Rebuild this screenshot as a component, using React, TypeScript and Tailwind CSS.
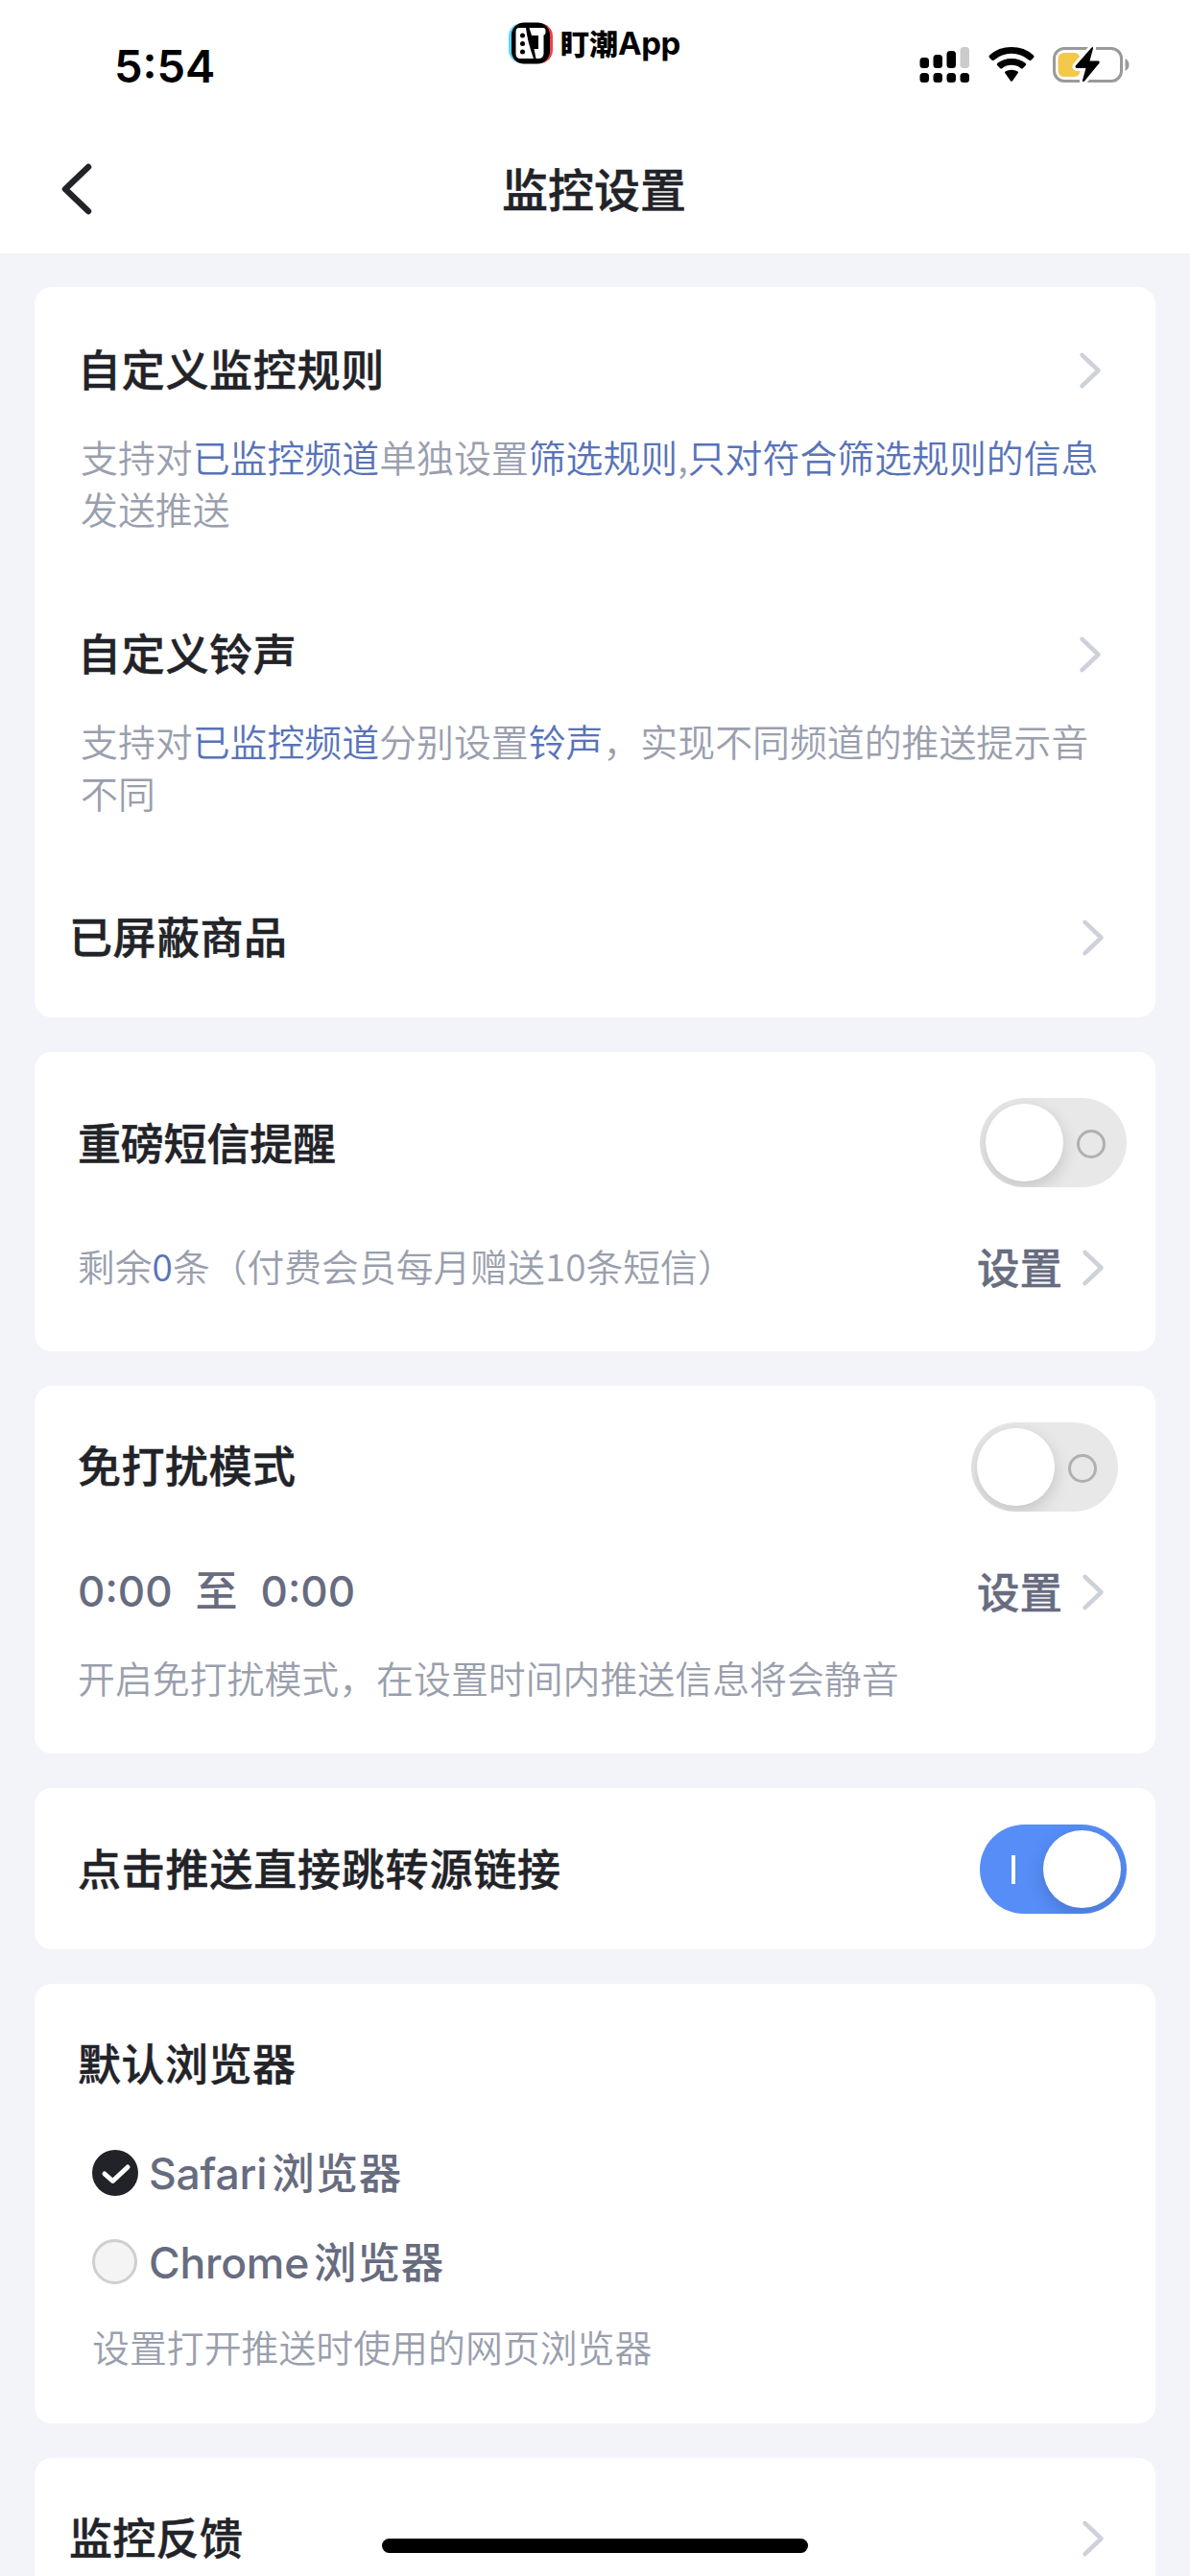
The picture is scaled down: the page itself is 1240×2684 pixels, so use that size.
import { useState } from 'react';
import type { ReactNode } from 'react';
import clsx from 'clsx';

const Chevron = ({ className }: { className?: string }) => (
  <svg width="24" height="40" viewBox="0 0 24 40" fill="none" className={clsx('shrink-0', className)}>
    <path d="M3.5 3.8L20.5 20L3.5 36.2" stroke="#cdd1da" strokeWidth="4.5" strokeLinecap="round" strokeLinejoin="round" />
  </svg>
);

const Toggle = ({ on, onChange, className }: { on: boolean; onChange: () => void; className?: string }) => (
  <button
    type="button"
    role="switch"
    aria-checked={on}
    onClick={onChange}
    className={clsx(
      'flex h-[93px] w-[153px] shrink-0 items-center justify-between overflow-hidden rounded-full px-1.5',
      on ? 'flex-row-reverse bg-[#568df7]' : 'bg-[#e8e8e8]',
      className
    )}
  >
    <span className="size-[81px] rounded-full bg-white shadow-[0_6px_18px_rgba(0,0,0,0.16)]" />
    {on ? (
      <span className="ml-[27px] h-[30px] w-1 bg-white" />
    ) : (
      <span className="mt-0.5 mr-4 size-[30px] rounded-full border-3 border-[#b0b0b0]" />
    )}
  </button>
);

const Card = ({ className, children }: { className?: string; children: ReactNode }) => (
  <section className={clsx('shrink-0 rounded-[18px] bg-white', className)}>{children}</section>
);

const Title = ({ className = 'tracking-[0.7px]', children }: { className?: string; children: ReactNode }) => (
  <h2
    className={clsx(
      'text-[45px] leading-[64px] font-medium whitespace-nowrap text-[#222328] [-webkit-text-stroke:0.5px]',
      className
    )}
  >
    {children}
  </h2>
);

const Blue = ({ children }: { children: ReactNode }) => <span className="text-[#5873b8]">{children}</span>;

const SettingLink = () => (
  <button type="button" className="flex items-center">
    <span className="text-[44.5px] leading-[64px] font-medium text-[#676c7f] [-webkit-text-stroke:0.4px]">设置</span>
    <Chevron className="mt-1 ml-5" />
  </button>
);

const StatusBar = () => (
  <div className="flex h-[132px] items-start justify-between pr-[63px] pl-[119px]">
    <span className="mt-[39px] w-[411px] font-[Inter,sans-serif] text-[47px] leading-[60px] font-semibold text-black">5:54</span>
    <div className="mt-[22px] mr-auto flex items-center">
      <svg width="46" height="44" viewBox="0 0 46 44">
        <rect x="0" y="1" width="40" height="42" rx="14" fill="#5fd0f5" />
        <rect x="6" y="1" width="40" height="42" rx="14" fill="#f0404a" />
        <rect x="3" y="0.5" width="40" height="43" rx="13" fill="#000" />
        <path d="M11 6H18Q19.5 20 26 38H12Q7.5 38 7.5 33V10Q7.5 6 11 6Z" fill="#fff" />
        <path d="M21.5 6H36Q38.5 6 38.5 8.5V11Q38.5 13 36.5 13.500V33Q36 38 31 38H28.5L26.5 28H31V14H24Z" fill="#fff" />
        <circle cx="14.5" cy="14" r="2.5" />
        <circle cx="14.5" cy="22.5" r="2.5" />
        <circle cx="14.5" cy="31" r="2.5" />
      </svg>
      <span className="ml-2 text-[30px] leading-[44px] font-black whitespace-nowrap text-black">
        盯潮<span className="font-[Inter,sans-serif] text-[33px] font-bold tracking-[-0.5px]">App</span>
      </span>
    </div>
    <div className="mt-[47px] flex items-center">
      <svg width="54" height="40" viewBox="0 0 54 40">
        <rect x="0.5" y="13" width="9.5" height="11" rx="3.5" />
        <rect x="14.5" y="10" width="9.5" height="14" rx="3.5" />
        <rect x="28.5" y="6" width="9.5" height="18" rx="3.5" />
        <rect x="42.5" y="2" width="9.5" height="22" rx="3.5" fill="#cbcbcb" />
        <rect x="0.5" y="29" width="9.5" height="10" rx="3.5" />
        <rect x="14.5" y="29" width="9.5" height="10" rx="3.5" />
        <rect x="28.5" y="29" width="9.5" height="10" rx="3.5" />
        <rect x="42.5" y="29" width="9.5" height="10" rx="3.5" />
      </svg>
      <svg width="48" height="40" viewBox="0 0 48 40" className="ml-[18px]">
        <path d="M1.2 13.2Q-0.3 11.8 1.2 10.4Q10.5 2 24 2T46.8 10.4Q48.3 11.8 46.8 13.2L44.6 15.4Q43.4 16.5 42 15.4Q34 8.8 24 8.8T6 15.4Q4.6 16.5 3.4 15.4Z" />
        <path d="M9.3 21.3Q8 20 9.4 18.7Q15.5 14 24 14T38.6 18.7Q40 20 38.7 21.3L36 24Q34.9 25.1 33.5 24Q29.5 20.8 24 20.8T14.5 24Q13.1 25.1 12 24Z" />
        <path d="M17.5 29.5Q16.3 28.3 17.8 27.2Q20.5 25.7 24 25.7T30.2 27.2Q31.7 28.3 30.5 29.5L25 37.2Q24 38.3 23 37.2Z" />
      </svg>
      <svg width="80" height="40" viewBox="0 0 80 40" className="ml-[19px]">
        <rect x="1.5" y="3.5" width="70" height="34" rx="10.5" fill="none" stroke="#9a9a9a" strokeWidth="3" />
        <path d="M75.5 14Q79.5 16 79.5 20.5T75.5 27Z" fill="#9a9a9a" />
        <rect x="5.5" y="8" width="23" height="25" rx="6" fill="#f3c94b" />
        <path
          d="M40.5 2.5Q42.5 1 42 3.5L38.5 16.5H47.5Q49.5 17 48.3 19L33 37.5Q30.5 39.5 31 36.5L34.5 24H25Q22.5 23.5 24 21.3Z"
          fill="#000"
          stroke="#fff"
          strokeWidth="6"
          strokeLinejoin="round"
          paintOrder="stroke"
        />
      </svg>
    </div>
  </div>
);

const Header = () => (
  <header className="h-[264px] shrink-0 bg-white">
    <StatusBar />
    <div className="flex h-[130px] items-center pl-[62px]">
      <button type="button" aria-label="返回">
        <svg width="36" height="56" viewBox="0 0 36 56" fill="none">
          <path d="M30 5L6 28L30 51" stroke="#222328" strokeWidth="6.5" strokeLinecap="round" strokeLinejoin="round" />
        </svg>
      </button>
      <h1 className="mb-1 flex-1 pr-[100px] text-center text-[48px] leading-[64px] font-medium text-[#222328] [-webkit-text-stroke:0.5px]">
        监控设置
      </h1>
    </div>
  </header>
);

const BROWSERS = ['Safari', 'Chrome'];

const App = () => {
  const [sms, setSms] = useState(false);
  const [quiet, setQuiet] = useState(false);
  const [direct, setDirect] = useState(true);
  const [browser, setBrowser] = useState('Safari');

  return (
    <div className="relative h-[2684px] w-[1240px] overflow-hidden bg-[#f3f4f9] font-['Noto_Sans_CJK_SC',sans-serif]">
      <Header />

      <main className="flex flex-col gap-9 px-9 pt-[35px]">
        <Card className="h-[761px] pt-[53px] pr-[56px] pl-[45px]">
          <div className="flex items-center justify-between">
            <Title>自定义监控规则</Title>
            <Chevron className="mt-1" />
          </div>
          <p className="mt-[32px] mr-[-12px] ml-[3px] text-[38.9px] leading-[54px] font-[350] text-[#9a9fae]">
            支持对<Blue>已监控频道</Blue>单独设置<Blue>筛选规则</Blue>,<Blue>只对符合筛选规则的信息</Blue>
            <br />
            发送推送
          </p>

          <div className="mt-[92px] flex items-center justify-between">
            <Title>自定义铃声</Title>
            <Chevron className="mt-1" />
          </div>
          <p className="mt-[32px] mr-[-12px] ml-[3px] text-[38.9px] leading-[54px] font-[350] text-[#9a9fae]">
            支持对<Blue>已监控频道</Blue>分别设置<Blue>铃声</Blue>，实现不同频道的推送提示音
            <br />
            不同
          </p>

          <div className="mt-[91px] mr-[-3px] ml-[-9px] flex items-center justify-between">
            <Title className="tracking-[0.5px]">已屏蔽商品</Title>
            <Chevron className="mt-1" />
          </div>
        </Card>

        <Card className="h-[312px] pt-[48px] pl-[45px]">
          <div className="flex items-center justify-between pr-[30px]">
            <Title className="mb-[2px] tracking-[-0.2px]">重磅短信提醒</Title>
            <Toggle on={sms} onChange={() => setSms(!sms)} />
          </div>
          <div className="mt-[50px] flex items-center justify-between pr-[53px]">
            <p className="mb-0.5 text-[38.8px] leading-[54px] font-[350] text-[#9a9fae]">
              剩余<Blue>0</Blue>条（付费会员每月赠送10条短信）
            </p>
            <SettingLink />
          </div>
        </Card>

        <Card className="h-[383px] pt-[38px] pl-[45px]">
          <div className="flex items-center justify-between pr-[39px]">
            <Title className="mb-[5px] tracking-[0.5px]">免打扰模式</Title>
            <Toggle on={quiet} onChange={() => setQuiet(!quiet)} />
          </div>
          <div className="mt-[49px] flex items-center justify-between pr-[53px]">
            <div className="mt-0.5 flex items-center font-[Inter,'Noto_Sans_CJK_SC',sans-serif] text-[44px] leading-[64px] font-medium text-[#676c7f]">
              <span>0:00</span>
              <span className="mx-6">至</span>
              <span>0:00</span>
            </div>
            <SettingLink />
          </div>
          <p className="mt-[30px] text-[38.9px] leading-[54px] font-[350] text-[#9a9fae]">
            开启免打扰模式，在设置时间内推送信息将会静音
          </p>
        </Card>

        <Card className="h-[168px] pt-[38px] pr-[30px] pl-[45px]">
          <div className="flex items-center justify-between">
            <Title className="mb-[4px] tracking-[0.8px]">点击推送直接跳转源链接</Title>
            <Toggle on={direct} onChange={() => setDirect(!direct)} />
          </div>
        </Card>

        <Card className="h-[458px] pt-[50px] pl-[45px]">
          <Title className="tracking-[0.5px]">默认浏览器</Title>
          <div className="mt-[36px] ml-[15px]">
            {BROWSERS.map((name) => (
              <button key={name} type="button" onClick={() => setBrowser(name)} className="flex h-[93px] items-center">
                {browser === name ? (
                  <svg width="48" height="48" viewBox="0 0 48 48" fill="none">
                    <circle cx="24" cy="24" r="24" fill="#222328" />
                    <path d="M13 25L21.5 32.5L37 18" stroke="#fff" strokeWidth="5" strokeLinecap="round" strokeLinejoin="round" />
                  </svg>
                ) : (
                  <span className="mr-px size-[47px] rounded-full border-3 border-[#cfcfcf] bg-[#f4f4f4]" />
                )}
                <span className="mt-0.5 ml-[11px] flex font-[Inter,'Noto_Sans_CJK_SC',sans-serif] text-[44.5px] leading-[64px] font-medium text-[#676c7f]">
                  <span className="tracking-[-0.2px]">{name}</span>
                  <span className="ml-[5px] tracking-[0.8px]">浏览器</span>
                </span>
              </button>
            ))}
          </div>
          <p className="mt-[14px] ml-[15px] text-[38.9px] leading-[54px] font-[350] text-[#9a9fae]">设置打开推送时使用的网页浏览器</p>
        </Card>

        <Card className="h-[160px] pt-[50px] pr-[53px] pl-[36px]">
          <div className="flex items-center justify-between">
            <Title className="tracking-[0.3px]">监控反馈</Title>
            <Chevron className="mt-1" />
          </div>
        </Card>
      </main>

      {/* home indicator */}
      <div className="absolute bottom-6 left-[398px] h-[15px] w-[444px] rounded-full bg-black" />
    </div>
  );
};

export default App;
